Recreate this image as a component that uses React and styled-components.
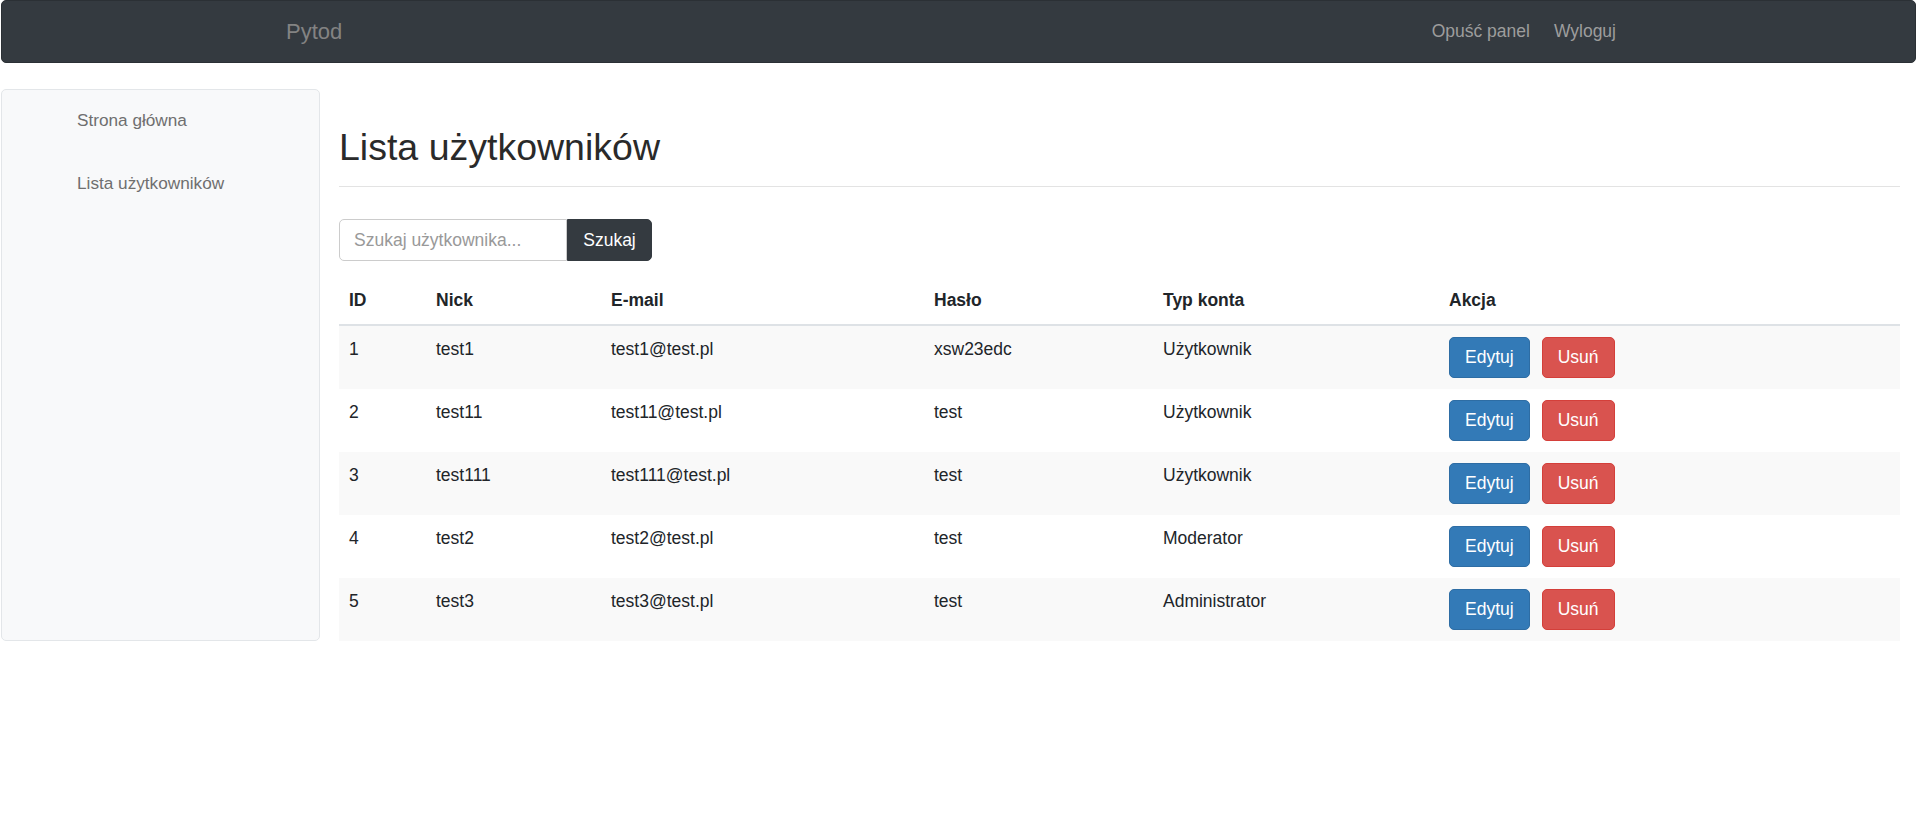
import React from 'react'
import styled, { createGlobalStyle } from 'styled-components'

const GlobalStyle = createGlobalStyle`
  html, body {
    margin: 0;
    padding: 0;
    background: #fff;
    font-family: "Liberation Sans", Arial, Helvetica, sans-serif;
    font-size: 16px;
    color: #212529;
  }
  * { box-sizing: border-box; }
`

const Page = styled.div`
  padding: 0 4px 0 1px;
`

const Navbar = styled.nav`
  height: 63px;
  background: #343a40;
  border: 1px solid #2b3035;
  border-radius: 5px;
  display: flex;
  align-items: center;
  justify-content: space-between;
  padding: 0 299px 0 284px;
`

const Brand = styled.a`
  font-size: 22px;
  color: #838383;
  text-decoration: none;
`

const NavLinks = styled.div`
  display: flex;
  gap: 24px;
`

const NavLink = styled.a`
  font-size: 17.5px;
  color: #9d9d9d;
  text-decoration: none;
`

const Body = styled.div`
  display: flex;
  align-items: stretch;
  gap: 19px;
  margin-top: 26px;
  padding-right: 16px;
`

const Sidebar = styled.aside`
  width: 319px;
  flex: none;
  background: #f8f9fa;
  border: 1px solid #e3e6e9;
  border-radius: 5px;
  padding: 20px 0 0 75px;
  display: flex;
  flex-direction: column;
  gap: 43px;
`

const SideLink = styled.a`
  font-size: 17.2px;
  line-height: 20px;
  color: #6f6f6f;
  text-decoration: none;
`

const Main = styled.main`
  flex: 1;
  padding-top: 38px;
`

const Title = styled.h1`
  margin: 0;
  font-size: 37.5px;
  line-height: 41px;
  font-weight: 400;
  color: #2a2a2a;
`

const Divider = styled.hr`
  margin: 18px 0 32px;
  border: 0;
  border-top: 1px solid #e3e3e3;
`

const SearchForm = styled.form`
  display: flex;
  margin-bottom: 15px;
`

const SearchInput = styled.input`
  width: 228px;
  height: 42px;
  padding: 0 14px;
  border: 1px solid #ccc;
  border-radius: 5px 0 0 5px;
  font-family: inherit;
  font-size: 17.5px;
  color: #555;
  outline: none;
  &::placeholder { color: #999; }
`

const SearchButton = styled.button`
  width: 85px;
  height: 42px;
  border: 1px solid #343a40;
  border-radius: 0 5px 5px 0;
  background: #343a40;
  color: #fff;
  font-family: inherit;
  font-size: 17.5px;
`

const Table = styled.table`
  width: 100%;
  border-collapse: collapse;
  table-layout: fixed;
  font-size: 17.5px;
`

const Th = styled.th`
  text-align: left;
  font-weight: 700;
  padding: 12px 10px 11px;
  line-height: 25px;
  border-bottom: 2px solid #dee2e6;
  width: ${p => p.w ? `${p.w}px` : 'auto'};
`

const Row = styled.tr`
  background: ${p => p.odd ? '#f9f9f9' : '#fff'};
  & + & td { border-top: 1px solid #dee2e6; }
`

const Td = styled.td`
  padding: 11px 10px;
  line-height: 24px;
  vertical-align: top;
`

const Actions = styled.div`
  display: flex;
  gap: 12px;
`

const ActionButton = styled.button`
  height: 41px;
  padding: 0 15px;
  border-radius: 5px;
  font-family: inherit;
  font-size: 17.5px;
  color: #fff;
  background: ${p => p.danger ? '#d9534f' : '#337ab7'};
  border: 1px solid ${p => p.danger ? '#d43f3a' : '#2e6da4'};
`

const columns = [
  { label: 'ID', w: 87 },
  { label: 'Nick', w: 175 },
  { label: 'E-mail', w: 323 },
  { label: 'Hasło', w: 229 },
  { label: 'Typ konta', w: 286 },
  { label: 'Akcja' },
]

const users = [
  { id: 1, nick: 'test1', email: 'test1@test.pl', pass: 'xsw23edc', type: 'Użytkownik' },
  { id: 2, nick: 'test11', email: 'test11@test.pl', pass: 'test', type: 'Użytkownik' },
  { id: 3, nick: 'test111', email: 'test111@test.pl', pass: 'test', type: 'Użytkownik' },
  { id: 4, nick: 'test2', email: 'test2@test.pl', pass: 'test', type: 'Moderator' },
  { id: 5, nick: 'test3', email: 'test3@test.pl', pass: 'test', type: 'Administrator' },
]

const App = () => {
  return (
    <Page>
      <GlobalStyle />
      <Navbar>
        <Brand href="#">Pytod</Brand>
        <NavLinks>
          <NavLink href="#">Opuść panel</NavLink>
          <NavLink href="#">Wyloguj</NavLink>
        </NavLinks>
      </Navbar>

      <Body>
        <Sidebar>
          <SideLink href="#">Strona główna</SideLink>
          <SideLink href="#">Lista użytkowników</SideLink>
        </Sidebar>

        <Main>
          <Title>Lista użytkowników</Title>
          <Divider />

          <SearchForm onSubmit={e => e.preventDefault()}>
            <SearchInput placeholder="Szukaj użytkownika..." />
            <SearchButton type="submit">Szukaj</SearchButton>
          </SearchForm>

          <Table>
            <thead>
              <tr>
                {columns.map(col => (
                  <Th key={col.label} w={col.w}>{col.label}</Th>
                ))}
              </tr>
            </thead>
            <tbody>
              {users.map((user, idx) => (
                <Row key={user.id} odd={idx % 2 === 0}>
                  <Td>{user.id}</Td>
                  <Td>{user.nick}</Td>
                  <Td>{user.email}</Td>
                  <Td>{user.pass}</Td>
                  <Td>{user.type}</Td>
                  <Td>
                    <Actions>
                      <ActionButton type="button">Edytuj</ActionButton>
                      <ActionButton type="button" danger>Usuń</ActionButton>
                    </Actions>
                  </Td>
                </Row>
              ))}
            </tbody>
          </Table>
        </Main>
      </Body>
    </Page>
  )
}

export default App
